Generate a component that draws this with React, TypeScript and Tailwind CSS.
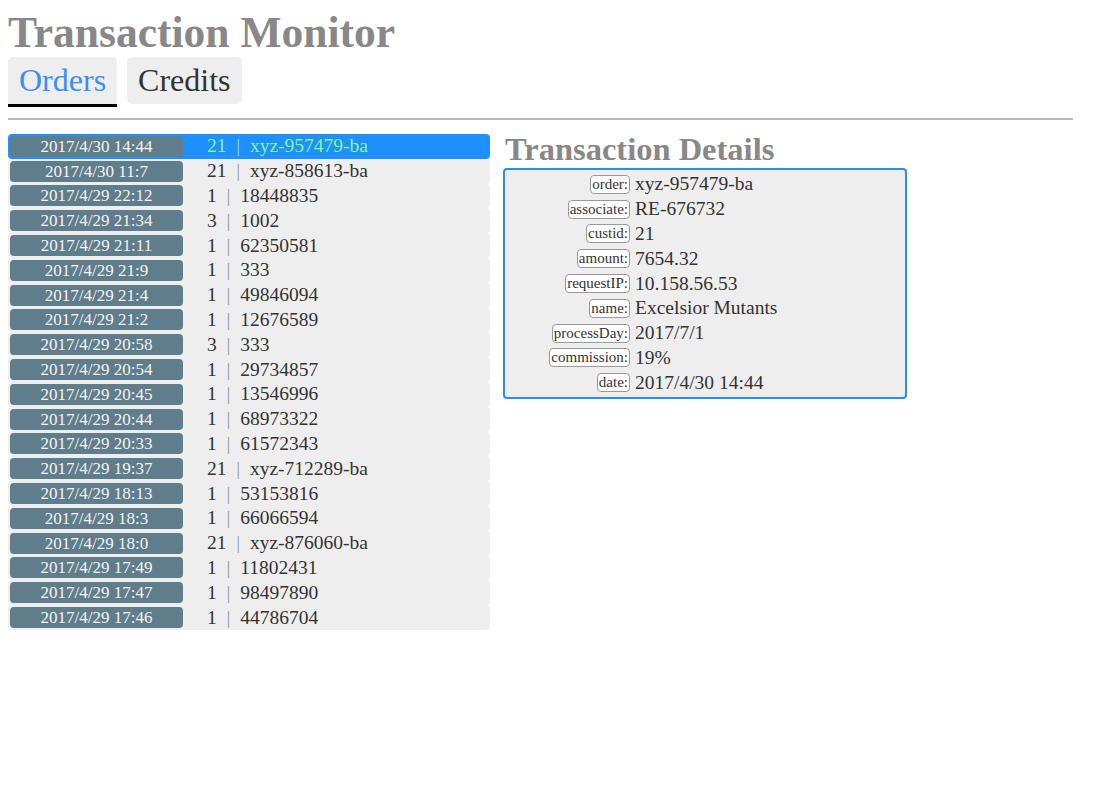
import React from 'react';

const rows = [
  { date: '2017/4/30 14:44', cust: '21', ref: 'xyz-957479-ba' },
  { date: '2017/4/30 11:7', cust: '21', ref: 'xyz-858613-ba' },
  { date: '2017/4/29 22:12', cust: '1', ref: '18448835' },
  { date: '2017/4/29 21:34', cust: '3', ref: '1002' },
  { date: '2017/4/29 21:11', cust: '1', ref: '62350581' },
  { date: '2017/4/29 21:9', cust: '1', ref: '333' },
  { date: '2017/4/29 21:4', cust: '1', ref: '49846094' },
  { date: '2017/4/29 21:2', cust: '1', ref: '12676589' },
  { date: '2017/4/29 20:58', cust: '3', ref: '333' },
  { date: '2017/4/29 20:54', cust: '1', ref: '29734857' },
  { date: '2017/4/29 20:45', cust: '1', ref: '13546996' },
  { date: '2017/4/29 20:44', cust: '1', ref: '68973322' },
  { date: '2017/4/29 20:33', cust: '1', ref: '61572343' },
  { date: '2017/4/29 19:37', cust: '21', ref: 'xyz-712289-ba' },
  { date: '2017/4/29 18:13', cust: '1', ref: '53153816' },
  { date: '2017/4/29 18:3', cust: '1', ref: '66066594' },
  { date: '2017/4/29 18:0', cust: '21', ref: 'xyz-876060-ba' },
  { date: '2017/4/29 17:49', cust: '1', ref: '11802431' },
  { date: '2017/4/29 17:47', cust: '1', ref: '98497890' },
  { date: '2017/4/29 17:46', cust: '1', ref: '44786704' },
];

const details = [
  ['order', 'xyz-957479-ba'],
  ['associate', 'RE-676732'],
  ['custid', '21'],
  ['amount', '7654.32'],
  ['requestIP', '10.158.56.53'],
  ['name', 'Excelsior Mutants'],
  ['processDay', '2017/7/1'],
  ['commission', '19%'],
  ['date', '2017/4/30 14:44'],
];

export default function App() {
  return (
    <div className="min-h-[800px] bg-white px-2 text-[#333] font-['Liberation_Serif',serif]">
      <h1 className="pt-[8px] text-[43.5px] font-bold leading-[48px] text-[#888]">Transaction Monitor</h1>

      {/* Tabs */}
      <div className="mt-[1px] flex gap-[10px]">
        <div className="h-[50px] rounded-t-[5px] border-b-[3px] border-black bg-[#eee] px-[11px] text-[32px] leading-[46px] text-[#3a8ef6]">
          Orders
        </div>
        <div className="h-[47px] rounded-[5px] bg-[#eee] px-[11px] text-[32px] leading-[46px] text-[#333]">
          Credits
        </div>
      </div>
      <div className="mt-[11px] h-[2px] w-[1065px] bg-[#bbb]" />

      <div className="mt-[14px] flex items-start gap-[13px]">
        {/* Order list */}
        <div className="flex w-[482px] flex-col">
          {rows.map((r, i) => {
            const active = i === 0;
            return (
              <div
                key={i}
                className={`flex h-[24.8px] items-center rounded-[4px] ${active ? 'bg-[#1e90ff] text-[#86f58a]' : 'bg-[#eee] text-[#333]'}`}
              >
                <div className="ml-[2px] h-[21px] w-[173px] rounded-[4px] bg-[#607d8b] text-center text-[17px] leading-[21px] text-[#f4f4f4]">
                  {r.date}
                </div>
                <div className="ml-[24px] text-[19.5px] leading-[24px] whitespace-pre">
                  {r.cust}
                  <span className={active ? 'text-[#8fe3a0]' : 'text-[#999]'}>{'  |  '}</span>
                  {r.ref}
                </div>
              </div>
            );
          })}
        </div>

        {/* Details */}
        <div className="-mt-[3px] flex flex-col">
          <h2 className="pl-[2px] text-[32.5px] font-bold leading-[37px] text-[#888]">Transaction Details</h2>
          <div className="w-[404px] rounded-[4px] border-2 border-[#2a8cf5] bg-[#eee] py-[2px]">
            {details.map(([k, v]) => (
              <div key={k} className="flex h-[24.8px] items-center">
                <div className="flex w-[125px] justify-end">
                  <span className="rounded-[4px] border border-[#999] bg-white px-[1px] text-[15px] leading-[17px] text-[#333]">
                    {k}:
                  </span>
                </div>
                <div className="ml-[5px] text-[19.5px] leading-[22px] text-[#333]">{v}</div>
              </div>
            ))}
          </div>
        </div>
      </div>
    </div>
  );
}
